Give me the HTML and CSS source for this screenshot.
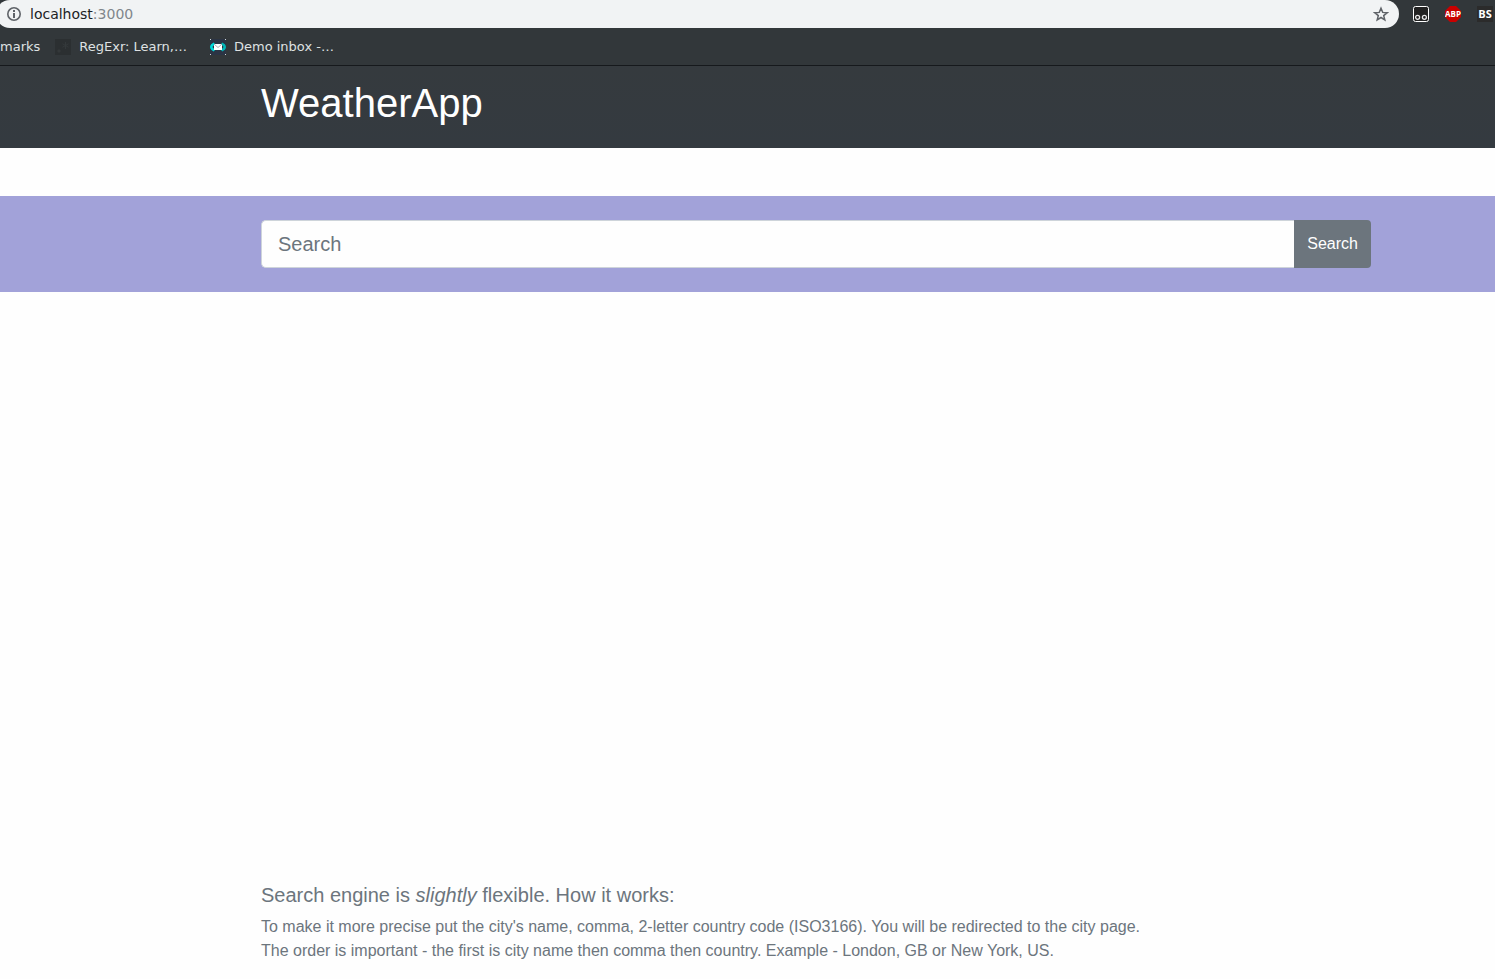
FILE: index.html
```html
<!DOCTYPE html>
<html lang="en">
<head>
<meta charset="utf-8">
<title>WeatherApp</title>
<link rel="stylesheet" href="styles.css">
</head>
<body>
<div class="browser">
  <div class="toolbar">
    <div class="address">
      <svg class="icon" viewBox="0 0 16 16" aria-hidden="true"><circle cx="8" cy="8" r="6.2" fill="none" stroke="#5f6368" stroke-width="1.6"/><path d="M7 4h2v2H7zM7 7h2v5H7z" fill="#5f6368"/></svg>
      <span class="url">localhost<span class="port">:3000</span></span>
      <button class="plain" type="button" aria-label="Bookmark this page">
        <svg class="icon" viewBox="0 0 16 16"><path d="M8 2.300l1.700 4.100 4.500.3-3.500 2.900 1.100 4.200L8 11.500l-3.800 2.300 1.100-4.200-3.500-2.900 4.500-.3z" fill="none" stroke="#5f6368" stroke-width="1.500"/></svg>
      </button>
    </div>
    <div class="extensions">
      <button class="plain" type="button" aria-label="Script manager">
        <svg class="icon" viewBox="0 0 16 16"><rect x=".5" y=".5" width="15" height="15" rx="2" fill="#222" stroke="#fff"/><circle cx="4.600" cy="11.300" r="2" fill="#222" stroke="#e6e6e6" stroke-width="1.300"/><circle cx="11.400" cy="11.300" r="2" fill="#222" stroke="#e6e6e6" stroke-width="1.300"/></svg>
      </button>
      <button class="plain" type="button" aria-label="Ad blocker">
        <svg class="icon" viewBox="0 0 16 16"><path d="M5 0h6l5 5v6l-5 5H5l-5-5V5z" fill="#c90000"/><text class="abp" x="8" y="11" text-anchor="middle">ABP</text></svg>
      </button>
      <button class="plain" type="button" aria-label="BS">
        <svg class="icon" viewBox="0 0 16 16"><path d="M0 0h16v16H0z" fill="#2b2b2b"/><text class="bs" x="8" y="12" text-anchor="middle">BS</text></svg>
      </button>
    </div>
  </div>
  <nav class="bookmarks" aria-label="Bookmarks">
    <a href="#">marks</a>
    <a href="#"><svg class="icon" viewBox="0 0 16 16" aria-hidden="true"><path d="M0 0h16v16H0z" fill="#2b2f31"/><path d="M3 11h2v2H3zM10.500 3v7M7.500 4.800l6 3.400M13.500 4.800l-6 3.400" fill="#34393b" stroke="#34393b"/></svg>RegExr: Learn,…</a>
    <a href="#"><svg class="icon" viewBox="0 0 16 16" aria-hidden="true"><path d="M0 0h16v16H0z" fill="#2b3444"/><path d="M0 0h1v1H0zM15 0h1v1h-1zM0 15h1v1H0zM15 15h1v1h-1z" fill="#cfd4d6"/><path d="M4.500 4.500L2 6.200Q.7 8 2 9.800l2.500 1.700" fill="none" stroke="#00d8d8" stroke-width="2.600"/><path d="M11.500 4.500L14 6.200q1.300 1.800 0 3.600l-2.500 1.700" fill="none" stroke="#00b8b8" stroke-width="2.600"/><path d="M4 5h8v6H4z" fill="#fff"/><path d="M4 5l4 3.500L12 5" fill="none" stroke="#8a94a0" stroke-width=".8"/></svg>Demo inbox -…</a>
  </nav>
</div>
<header class="header"><h1 class="brand">WeatherApp</h1></header>
<main class="main">
  <form class="search">
    <input class="field" type="text" placeholder="Search" aria-label="Search">
    <button class="submit" type="button">Search</button>
  </form>
</main>
<footer class="help">
  <h2 class="help-title">Search engine is <em>slightly</em> flexible. How it works:</h2>
  <p class="help-text">To make it more precise put the city's name, comma, 2-letter country code (ISO3166). You will be redirected to the city page.<br>The order is important - the first is city name then comma then country. Example - London, GB or New York, US.</p>
</footer>
</body>
</html>
```

FILE: styles.css
```css
* {
  box-sizing: border-box;
}

body {
  display: flex;
  flex-direction: column;
  min-height: 100vh;
  margin: 0;
  background: #fefefe;
  color: #6c757d;
  font: 16px/24px "Liberation Sans", Arial, sans-serif;
}

.browser {
  overflow: hidden;
  background: #32373a;
  border-bottom: 1px solid #16191c;
  font-family: "DejaVu Sans", sans-serif;
}

.toolbar {
  display: flex;
  align-items: center;
  gap: 14px;
  height: 28px;
}

.address {
  display: flex;
  flex: 1;
  align-items: center;
  gap: 8px;
  height: 28px;
  margin-left: -4px;
  padding: 0 10px;
  border-radius: 14px;
  background: #f1f3f4;
  font-size: 14px;
}

.url {
  flex: 1;
  color: #202124;
}

.port {
  color: #80868b;
}

.icon {
  display: block;
  flex: none;
  width: 16px;
  height: 16px;
}

.plain {
  padding: 0;
  border: 0;
  background: none;
}

.extensions {
  display: flex;
  gap: 16px;
  padding-right: 2px;
}

.abp {
  fill: #fff;
  font: bold 8px "Open Sans", sans-serif;
}

.bs {
  fill: #fff;
  font: bold 11px "Open Sans", sans-serif;
}

.bookmarks {
  display: flex;
  align-items: center;
  height: 37px;
  gap: 23px;
  font-size: 13px;
}

.bookmarks a {
  display: flex;
  align-items: center;
  gap: 8px;
  color: #dfe1e2;
  text-decoration: none;
}

.bookmarks a:first-child {
  margin-right: -8px;
}

.header {
  padding: 13px 124px 21px 261px;
  background: linear-gradient(#353a3e, #343a40);
}

.brand {
  margin: 0;
  color: #fff;
  font-size: 40px;
  font-weight: 400;
  line-height: 48px;
}

.main {
  flex: 1;
  padding-top: 48px;
}

.search {
  display: flex;
  padding: 24px 124px 24px 261px;
  background: #a2a2d9;
}

.field {
  flex: 1;
  min-width: 0;
  height: 48px;
  padding: 8px 16px;
  border: 1px solid #ced4da;
  border-right: 0;
  border-radius: 5px 0 0 5px;
  background: #fefefe;
  color: #495057;
  font: 20px/30px "Liberation Sans", Arial, sans-serif;
}

.field::placeholder {
  color: #6c757d;
}

.submit {
  padding: 0 13px;
  border: 0;
  border-radius: 0 4px 4px 0;
  background: #6c757d;
  color: #fff;
  font: 16px/24px "Liberation Sans", Arial, sans-serif;
}

.help {
  padding: 0 124px 16px 261px;
}

.help-title {
  margin: 0 0 8px;
  font-size: 20px;
  font-weight: 400;
  line-height: 24px;
}

.help-text {
  margin: 0;
}
```
